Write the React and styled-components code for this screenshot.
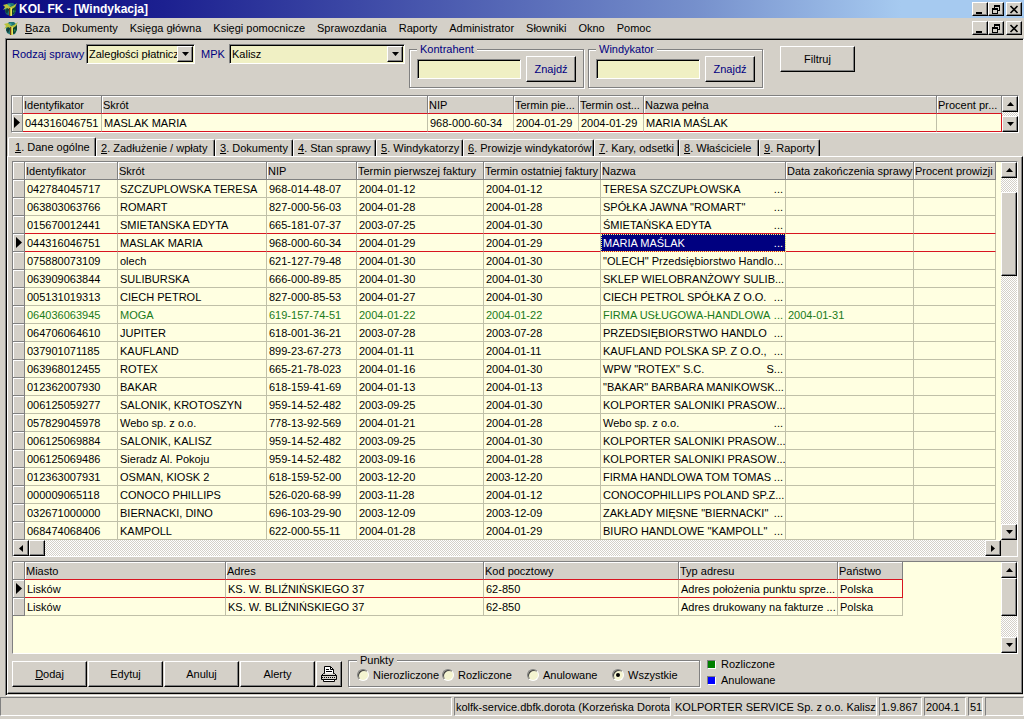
import React from "react";
import styled, { createGlobalStyle, css } from "styled-components";

const face = "#d4d0c8";
const shade = "#808080";
const cream = "#ffffe1";
const navy = "#000080";
const red = "#d81420";

const GlobalStyle = createGlobalStyle`
  *, *::before, *::after { box-sizing: border-box; }
  body {
    margin: 0;
    background: ${face};
    color: #000;
    font: 11px/14px "Liberation Sans", Arial, sans-serif;
  }
  button, input, select { font: inherit; color: inherit; margin: 0; border-radius: 0; }
  u { text-underline-offset: 1px; }
`;

const raised = css`
  border: 1px solid;
  border-color: #fff #000 #000 #fff;
  box-shadow: inset -1px -1px ${shade};
  background: ${face};
`;

const sunken = css`
  border: 1px solid;
  border-color: ${shade} #fff #fff ${shade};
  box-shadow: inset 1px 1px #000;
`;

const checker = css`
  background: repeating-conic-gradient(${face} 0 25%, #fff 0 50%) 0 0 / 2px 2px;
`;

const Window = styled.div`
  display: flex;
  flex-direction: column;
  min-height: 100vh;
`;

const TitleBar = styled.header`
  display: flex;
  align-items: center;
  height: 18px;
  padding: 0 2px 0 3px;
  gap: 1px;
  background: linear-gradient(90deg, #0a0a80, #1c2090 16%, #7690cc 68%, #a6caf0 88%);
`;

const Title = styled.h1`
  flex: 1;
  margin: 0;
  color: #fff;
  font-size: 12px;
  line-height: 16px;
`;

const MenuBar = styled.div`
  display: flex;
  align-items: center;
  height: 20px;
  padding: 0 2px 0 4px;
`;

const Menu = styled.nav`
  flex: 1;
  display: flex;
  margin-left: 6px;
  gap: 12px;
`;

const MenuItem = styled.button`
  padding: 0;
  border: 0;
  background: none;
  white-space: nowrap;
`;

const WindowButtons = styled.div`
  display: flex;
`;

const WindowButton = styled.button`
  ${raised}
  display: grid;
  place-items: center;
  width: 16px;
  height: 14px;
  padding: 0;
  margin-left: ${(p) => (p.$apart ? 2 : 0)}px;
`;

const Frame = styled.main`
  ${sunken}
  display: flex;
  flex-direction: column;
  margin: 0 0 0 5px;
  padding: 1px 0 1px 1px;
`;

const Filters = styled.form`
  display: flex;
  align-items: flex-start;
  height: 55px;
  padding: 4px 0 0 5px;
  color: ${navy};
`;

const FilterLabel = styled.label`
  width: ${(p) => p.$width}px;
  margin: 3px 0 0 ${(p) => (p.$next ? 6 : 0)}px;
  white-space: nowrap;
`;

const Combo = styled.div`
  ${sunken}
  display: grid;
  width: ${(p) => p.$width}px;
  height: 20px;
  padding: 1px;
  background: #f0f0c4;
  color: #000;
  & > * { grid-area: 1 / 1; }
  select {
    appearance: none;
    width: 100%;
    min-width: 0;
    padding: 0 16px 0 1px;
    border: 0;
    background: none;
    outline: 0;
  }
`;

const ComboArrow = styled.span`
  ${raised}
  display: grid;
  place-items: center;
  justify-self: end;
  width: 16px;
  pointer-events: none;
`;

const Group = styled.fieldset`
  display: flex;
  align-items: center;
  min-width: 0;
  height: ${(p) => p.$height}px;
  margin: 0;
  padding: ${(p) => p.$pad};
  border: 1px solid ${shade};
  box-shadow: 1px 1px #fff, inset 1px 1px #fff;
  legend {
    height: 12px;
    padding: 0 3px;
    line-height: 12px;
    background: ${face};
  }
`;

const FilterGroup = styled(Group)`
  width: 175px;
  margin: -1px 0 0 4px;
  gap: 5px;
`;

const FilterInput = styled.input`
  ${sunken}
  width: 104px;
  height: 20px;
  padding: 1px 3px;
  background: #f0f0c4;
`;

const PushButton = styled.button`
  ${raised}
  display: grid;
  place-items: center;
  flex: none;
  width: ${(p) => p.$width || 75}px;
  height: 26px;
  padding: 0;
`;

const FilterSubmit = styled(PushButton)`
  margin: 2px 0 0 17px;
  color: #000;
`;

const Grid = styled.section`
  display: grid;
  grid-template-columns: minmax(0, 1fr) 16px;
  margin: ${(p) => p.$margin};
  border: 1px solid;
  border-color: ${shade} #fff #fff ${shade};
  background: ${cream};
  min-height: ${(p) => p.$min || 0}px;
`;

const Table = styled.table`
  width: 100%;
  align-self: start;
  table-layout: fixed;
  border-collapse: separate;
  border-spacing: 0;
`;

const Head = styled.th`
  height: 18px;
  padding: 0 0 0 1px;
  overflow: hidden;
  border-right: 1px solid ${shade};
  border-bottom: 1px solid ${(p) => (p.$edge ? red : shade)};
  box-shadow: inset 1px 1px #fff;
  background: ${face};
  font-weight: normal;
  text-align: left;
  white-space: nowrap;
`;

const Marker = styled.td`
  height: 18px;
  padding: 0;
  border-right: 1px solid ${shade};
  border-bottom: 1px solid ${shade};
  box-shadow: inset 1px 1px #fff;
  background: ${face};
  line-height: 0;
  text-align: center;
`;

const Cell = styled.td`
  height: 18px;
  padding: 0 3px 0 2px;
  overflow: hidden;
  border-right: 1px solid ${(p) => (p.$active && p.$last ? red : "#c0c0a8")};
  border-bottom: 1px solid ${(p) => (p.$active || p.$edge ? red : "#c0c0a8")};
  white-space: nowrap;
`;

const Row = styled.tr`
  color: ${(p) => (p.$settled ? "#1a7a1a" : "#000")};
`;

const NameCell = styled(Cell)`
  padding-right: 2px;
  ${(p) =>
    p.$active &&
    css`
      background: ${navy};
      background-clip: padding-box;
      color: #fff;
      outline: 1px dotted #ffff80;
      outline-offset: -1px;
    `}
`;

const NameLine = styled.div`
  display: flex;
  justify-content: space-between;
`;

const Filler = styled.td`
  padding: 0;
`;

const VBar = styled.div`
  ${checker}
  display: flex;
  flex-direction: column;
  justify-content: space-between;
`;

const HBar = styled.div`
  ${checker}
  display: flex;
  justify-content: space-between;
`;

const BarStart = styled.div`
  display: flex;
  flex-direction: inherit;
`;

const ArrowButton = styled.button`
  ${raised}
  display: grid;
  place-items: center;
  width: 16px;
  height: 16px;
  padding: 0;
`;

const Thumb = styled.div`
  ${raised}
  width: 16px;
  height: ${(p) => p.$height}px;
  margin-top: ${(p) => p.$gap || 0}px;
`;

const Corner = styled.div`
  background: ${face};
`;

const Tabs = styled.div`
  display: flex;
  align-items: flex-end;
  height: 19px;
  margin-top: 4px;
  padding-left: 1px;
`;

const Tab = styled.button`
  width: ${(p) => p.$width}px;
  height: ${(p) => (p.$active ? 19 : 17)}px;
  padding: 0 0 0 ${(p) => (p.$active ? 6 : 4)}px;
  border: 1px solid #fff;
  border-right: 1px solid #000;
  border-bottom: 0;
  border-radius: 2px 2px 0 0;
  box-shadow: inset -1px 0 ${shade};
  background: ${face};
  text-align: left;
  white-space: nowrap;
  overflow: hidden;
`;

const TabPage = styled.div`
  border: 1px solid;
  border-color: #fff #000 #000 #fff;
  box-shadow: inset -1px -1px ${shade};
  padding: 4px 4px 6px;
`;

const Actions = styled.footer`
  display: flex;
  align-items: flex-end;
  gap: 1px;
`;

const Points = styled(Group)`
  width: 352px;
  margin: 0 6px 0 5px;
`;

const RadioLabel = styled.label`
  display: flex;
  align-items: center;
  flex: 0 0 85px;
  gap: 4px;
  white-space: nowrap;
  input {
    appearance: none;
    flex: none;
    display: grid;
    place-items: center;
    width: 12px;
    height: 12px;
    border: 1px solid;
    border-color: ${shade} #fff #fff ${shade};
    border-radius: 50%;
    box-shadow: inset 1px 1px #404040;
    background: #f4f4d0;
  }
  input:checked::before {
    content: "";
    width: 4px;
    height: 4px;
    border-radius: 50%;
    background: #000;
  }
`;

const Legend = styled.ul`
  display: grid;
  gap: 2px;
  margin: 0;
  padding: 0;
  list-style: none;
`;

const LegendItem = styled.li`
  display: flex;
  align-items: center;
  gap: 5px;
  &::before {
    content: "";
    width: 9px;
    height: 9px;
    border: 1px solid;
    border-color: ${shade} #fff #fff ${shade};
    background: ${(p) => p.$color};
  }
`;

const StatusBar = styled.footer`
  display: flex;
  gap: 2px;
  margin-top: auto;
  padding: 1px 0 3px;
`;

const StatusPanel = styled.div`
  flex: ${(p) => (p.$width ? `0 0 ${p.$width}px` : "1 1 0")};
  height: 19px;
  padding: 2px 0 0 1px;
  overflow: hidden;
  border: 1px solid;
  border-color: ${(p) => (p.$flat ? face : shade)} #fff #fff ${(p) => (p.$flat ? face : shade)};
  line-height: 15px;
  white-space: nowrap;
`;

const arrows = {
  up: "M0 4h7L3.5 0z",
  down: "M0 0h7L3.5 4z",
  left: "M4 0v7L0 3.5z",
  right: "M0 0v7l4-3.5z",
};

function Arrow({ dir }) {
  const flat = dir === "up" || dir === "down";
  return (
    <svg width={flat ? 7 : 4} height={flat ? 4 : 7} aria-hidden="true">
      <path d={arrows[dir]} />
    </svg>
  );
}

function AppIcon() {
  return (
    <svg width="15" height="15" viewBox="0 0 15 15" aria-hidden="true">
      <path d="M2 5L5 1l5 0 3 3v5l-2 4-4 1-4-2-1-3z" fill="#1d7474" />
      <path d="M3 4l3-2 2 1-3 4z" fill="#43a6a0" />
      <path d="M2 9l3-4 2 1-3 6z" fill="#123f3a" />
      <path d="M9 6l4-2v4l-2 4-2 1z" fill="#0e4030" />
      <path d="M0 3l4-1 3 3 3-1 4-3-2 4-3 2v2l-1 5H6V7L4 6 0 8l2-3z" fill="#b8c23c" />
      <path d="M6 6h1v8H6z" fill="#7a3a10" />
      <path d="M8 6h1v8H8z" fill="#f0e060" />
      <path d="M10 8l2 1-2 2z" fill="#2f8f4a" />
    </svg>
  );
}

function Controls() {
  return (
    <WindowButtons>
      <WindowButton type="button" aria-label="Minimalizuj">
        <svg width="10" height="9"><path d="M1 7h6v2H1z" /></svg>
      </WindowButton>
      <WindowButton type="button" aria-label="Przywróć">
        <svg width="10" height="9" shapeRendering="crispEdges">
          <path d="M3 0h6v6H7V5h1V2H4v1H3zM1 3h6v6H1zM2 5v3h4V5z" fillRule="evenodd" />
        </svg>
      </WindowButton>
      <WindowButton type="button" aria-label="Zamknij" $apart>
        <svg width="10" height="9"><path d="M1.5 1l7 7M8.5 1l-7 7" stroke="#000" strokeWidth="1.6" /></svg>
      </WindowButton>
    </WindowButtons>
  );
}

function Pointer() {
  return (
    <svg width="6" height="11" aria-label="Bieżący wiersz"><path d="M0 0l6 5.5L0 11z" /></svg>
  );
}

function PrinterIcon() {
  return (
    <svg width="18" height="18" viewBox="0 0 18 18" aria-hidden="true" stroke="#000">
      <path d="M4.5 9.5v-8h6l3 3v5z" fill="#fff" />
      <path d="M10.5 1.5v3h3M6 4.5h3M6 6.5h6" fill="none" />
      <path d="M4.5 8.5h-1l-2 2v4h15v-4l-2-2h-1" fill="#d4d0c8" />
      <path d="M1.5 10.5h15" fill="none" />
      <path d="M2 12.5h14" fill="none" strokeDasharray="1 1" />
      <path d="M3.5 14.5h11v2h-11z" fill="#fff" />
    </svg>
  );
}

function VerticalBar({ thumb, gap }) {
  return (
    <VBar>
      <BarStart>
        <ArrowButton type="button" aria-label="W górę"><Arrow dir="up" /></ArrowButton>
        {thumb && <Thumb $height={thumb} $gap={gap} />}
      </BarStart>
      <ArrowButton type="button" aria-label="W dół"><Arrow dir="down" /></ArrowButton>
    </VBar>
  );
}

function Columns({ widths }) {
  return (
    <colgroup>
      {widths.map((w, i) => (
        <col key={i} style={w ? { width: w } : undefined} />
      ))}
    </colgroup>
  );
}

function Heads({ names, edge }) {
  return (
    <thead>
      <tr>
        <Head aria-label="Znacznik" />
        {names.map((n) => <Head key={n} scope="col" $edge={edge}>{n}</Head>)}
      </tr>
    </thead>
  );
}

function PlainRow({ values, active }) {
  return (
    <Row>
      <Marker>{active && <Pointer />}</Marker>
      {values.map((v, i) => (
        <Cell key={i} $active={active} $last={i === values.length - 1}>{v}</Cell>
      ))}
    </Row>
  );
}

const menuItems = ["Dokumenty", "Księga główna", "Księgi pomocnicze", "Sprawozdania", "Raporty", "Administrator", "Słowniki", "Okno", "Pomoc"];

const tabs = [
  ["Dane ogólne", 88],
  ["Zadłużenie / wpłaty", 119],
  ["Dokumenty", 78],
  ["Stan sprawy", 83],
  ["Windykatorzy", 87],
  ["Prowizje windykatorów", 131],
  ["Kary, odsetki", 85],
  ["Właściciele", 80],
  ["Raporty", 61],
];

const selectedCase = ["044316046751", "MASLAK MARIA", "968-000-60-34", "2004-01-29", "2004-01-29", "MARIA MAŚLAK", ""];

const cases = [
  ["042784045717", "SZCZUPLOWSKA TERESA", "968-014-48-07", "2004-01-12", "2004-01-12", "TERESA SZCZUPŁOWSKA"],
  ["063803063766", "ROMART", "827-000-56-03", "2004-01-28", "2004-01-28", "SPÓŁKA JAWNA \"ROMART\""],
  ["015670012441", "SMIETANSKA EDYTA", "665-181-07-37", "2003-07-25", "2004-01-30", "ŚMIETAŃSKA EDYTA"],
  ["044316046751", "MASLAK MARIA", "968-000-60-34", "2004-01-29", "2004-01-29", "MARIA MAŚLAK"],
  ["075880073109", "olech", "621-127-79-48", "2004-01-30", "2004-01-30", "\"OLECH\" Przedsiębiorstwo Handlo"],
  ["063909063844", "SULIBURSKA", "666-000-89-85", "2004-01-30", "2004-01-30", "SKLEP WIELOBRANŻOWY SULIB"],
  ["005131019313", "CIECH PETROL", "827-000-85-53", "2004-01-27", "2004-01-30", "CIECH PETROL SPÓŁKA Z O.O."],
  ["064036063945", "MOGA", "619-157-74-51", "2004-01-22", "2004-01-22", "FIRMA USŁUGOWA-HANDLOWA", "...", "2004-01-31"],
  ["064706064610", "JUPITER", "618-001-36-21", "2003-07-28", "2003-07-28", "PRZEDSIĘBIORSTWO HANDLO"],
  ["037901071185", "KAUFLAND", "899-23-67-273", "2004-01-11", "2004-01-11", "KAUFLAND POLSKA SP. Z O.O.,"],
  ["063968012455", "ROTEX", "665-21-78-023", "2004-01-16", "2004-01-30", "WPW \"ROTEX\" S.C.", "S..."],
  ["012362007930", "BAKAR", "618-159-41-69", "2004-01-13", "2004-01-13", "\"BAKAR\" BARBARA MANIKOWSK"],
  ["006125059277", "SALONIK, KROTOSZYN", "959-14-52-482", "2003-09-25", "2004-01-30", "KOLPORTER SALONIKI PRASOW"],
  ["057829045978", "Webo sp. z o.o.", "778-13-92-569", "2004-01-21", "2004-01-28", "Webo sp. z o.o."],
  ["006125069884", "SALONIK, KALISZ", "959-14-52-482", "2003-09-25", "2004-01-30", "KOLPORTER SALONIKI PRASOW"],
  ["006125069486", "Sieradz Al. Pokoju", "959-14-52-482", "2003-09-16", "2004-01-28", "KOLPORTER SALONIKI PRASOW"],
  ["012363007931", "OSMAN, KIOSK 2", "618-159-52-00", "2003-12-20", "2003-12-20", "FIRMA HANDLOWA TOM TOMAS"],
  ["000009065118", "CONOCO PHILLIPS", "526-020-68-99", "2003-11-28", "2004-01-12", "CONOCOPHILLIPS POLAND SP.Z"],
  ["032671000000", "BIERNACKI, DINO", "696-103-29-90", "2003-12-09", "2003-12-09", "ZAKŁADY MIĘSNE \"BIERNACKI\""],
  ["068474068406", "KAMPOLL", "622-000-55-11", "2004-01-28", "2004-01-29", "BIURO HANDLOWE \"KAMPOLL\""],
];

const addresses = [
  ["Lisków", "KS. W. BLIŹNIŃSKIEGO 37", "62-850", "Adres położenia punktu sprze...", "Polska"],
  ["Lisków", "KS. W. BLIŹNIŃSKIEGO 37", "62-850", "Adres drukowany na fakturze ...", "Polska"],
];

const current = 3;

export default function App() {
  return (
    <Window>
      <GlobalStyle />
      <TitleBar>
        <AppIcon />
        <Title>KOL FK - [Windykacja]</Title>
        <Controls />
      </TitleBar>
      <MenuBar>
        <AppIcon />
        <Menu>
          <MenuItem type="button"><u>B</u>aza</MenuItem>
          {menuItems.map((m) => <MenuItem type="button" key={m}>{m}</MenuItem>)}
        </Menu>
        <Controls />
      </MenuBar>

      <Frame>
        <Filters onSubmit={(e) => e.preventDefault()}>
          <FilterLabel htmlFor="kind" $width={74}>Rodzaj sprawy</FilterLabel>
          <Combo $width={109}>
            <select id="kind"><option>Zaległości płatnicze</option></select>
            <ComboArrow><Arrow dir="down" /></ComboArrow>
          </Combo>
          <FilterLabel htmlFor="mpk" $width={28} $next>MPK</FilterLabel>
          <Combo $width={176}>
            <select id="mpk"><option>Kalisz</option></select>
            <ComboArrow><Arrow dir="down" /></ComboArrow>
          </Combo>
          {["Kontrahent", "Windykator"].map((name) => (
            <FilterGroup key={name} $height={45} $pad="0 7px 4px">
              <legend>{name}</legend>
              <FilterInput type="text" aria-label={name} />
              <PushButton type="button" $width={50}>Znajdź</PushButton>
            </FilterGroup>
          ))}
          <FilterSubmit type="submit">Filtruj</FilterSubmit>
        </Filters>

        <Grid $margin="0 4px">
          <Table>
            <Columns widths={[11, 79, 326, 86, 65, 65, 0, 65]} />
            <Heads edge names={["Identyfikator", "Skrót", "NIP", "Termin pie...", "Termin ost...", "Nazwa pełna", "Procent pr..."]} />
            <tbody>
              <PlainRow values={selectedCase} active />
            </tbody>
          </Table>
          <VerticalBar />
        </Grid>

        <Tabs role="tablist">
          {tabs.map(([name, width], i) => (
            <Tab key={name} type="button" role="tab" aria-selected={i === 0} $active={i === 0} $width={width}>
              <u>{i + 1}</u>. {name}
            </Tab>
          ))}
        </Tabs>

        <TabPage>
          <Grid $margin="0 0 4px">
            <Table>
              <Columns widths={[12, 93, 149, 90, 127, 117, 185, 128, 82, 0]} />
              <Heads names={["Identyfikator", "Skrót", "NIP", "Termin pierwszej faktury", "Termin ostatniej faktury", "Nazwa", "Data zakończenia sprawy", "Procent prowizji"]} />
              <tbody>
                {cases.map(([id, short, nip, first, last, name, tail = "...", end = ""], i) => {
                  const active = i === current;
                  const edge = i === current - 1;
                  return (
                    <Row key={id} $settled={end !== ""}>
                      <Marker>{active && <Pointer />}</Marker>
                      {[id, short, nip, first, last].map((v, k) => (
                        <Cell key={k} $active={active} $edge={edge}>{v}</Cell>
                      ))}
                      <NameCell $active={active} $edge={edge}>
                        <NameLine><span>{name}</span><span>{tail}</span></NameLine>
                      </NameCell>
                      <Cell $active={active} $edge={edge}>{end}</Cell>
                      <Cell $active={active} $edge={edge} />
                      <Filler />
                    </Row>
                  );
                })}
              </tbody>
            </Table>
            <VerticalBar thumb={84} gap={14} />
            <HBar>
              <BarStart>
                <ArrowButton type="button" aria-label="W lewo"><Arrow dir="left" /></ArrowButton>
                <Thumb $height={16} />
              </BarStart>
              <ArrowButton type="button" aria-label="W prawo"><Arrow dir="right" /></ArrowButton>
            </HBar>
            <Corner />
          </Grid>

          <Grid $margin="0" $min={93}>
            <Table>
              <Columns widths={[12, 201, 258, 195, 159, 65, 0]} />
              <Heads edge names={["Miasto", "Adres", "Kod pocztowy", "Typ adresu", "Państwo"]} />
              <tbody>
                {addresses.map((a, i) => (
                  <PlainRow key={i} values={a} active={i === 0} />
                ))}
              </tbody>
            </Table>
            <VerticalBar thumb={38} />
          </Grid>

          <Actions>
            <PushButton type="button"><span><u>D</u>odaj</span></PushButton>
            <PushButton type="button">Edytuj</PushButton>
            <PushButton type="button">Anuluj</PushButton>
            <PushButton type="button">Alerty</PushButton>
            <PushButton type="button" aria-label="Drukuj" $width={26}><PrinterIcon /></PushButton>
            <Points $height={33} $pad="0 8px 2px">
              <legend>Punkty</legend>
              {["Nierozliczone", "Rozliczone", "Anulowane", "Wszystkie"].map((r) => (
                <RadioLabel key={r}>
                  <input type="radio" name="points" defaultChecked={r === "Wszystkie"} />
                  {r}
                </RadioLabel>
              ))}
            </Points>
            <Legend>
              <LegendItem $color="#008000">Rozliczone</LegendItem>
              <LegendItem $color="#0000ff">Anulowane</LegendItem>
            </Legend>
          </Actions>
        </TabPage>
      </Frame>

      <StatusBar>
        <StatusPanel />
        <StatusPanel $width={217}>kolfk-service.dbfk.dorota (Korzeńska Dorota</StatusPanel>
        <StatusPanel $width={204} $flat>KOLPORTER SERVICE Sp. z o.o. Kalisz</StatusPanel>
        <StatusPanel $width={43}>1.9.867</StatusPanel>
        <StatusPanel $width={42}>2004.1</StatusPanel>
        <StatusPanel $width={15}>51</StatusPanel>
        <StatusPanel $width={39} />
      </StatusBar>
    </Window>
  );
}
